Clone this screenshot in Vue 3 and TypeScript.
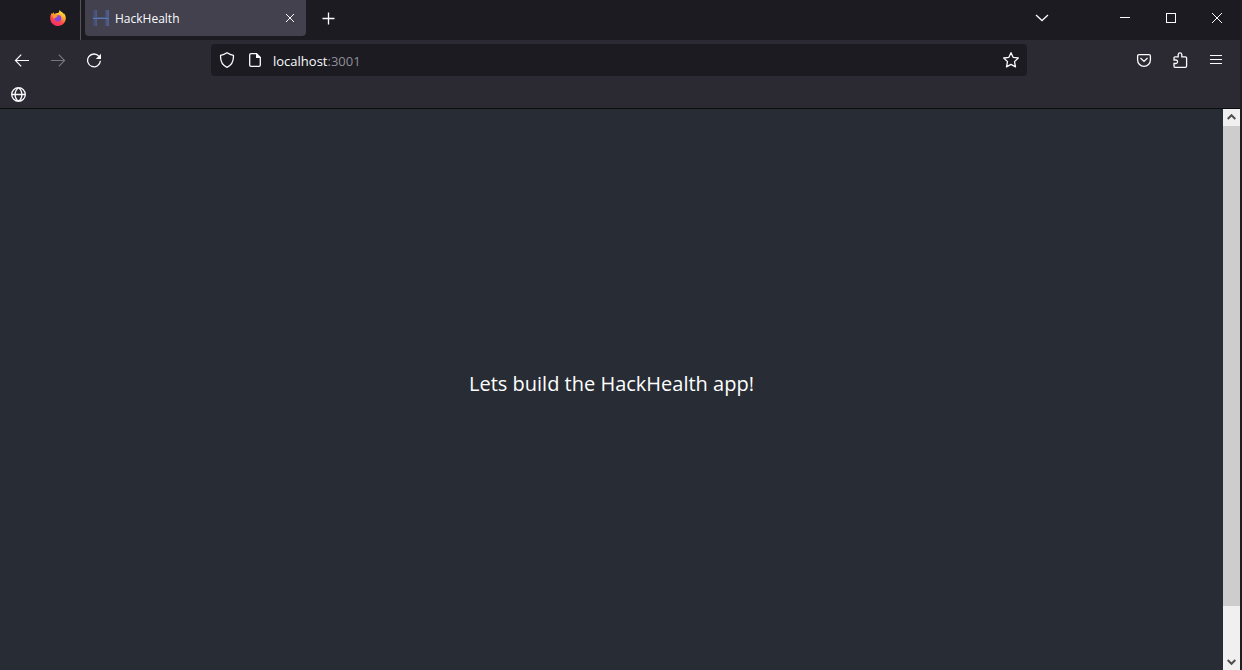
<script setup lang="ts">
import { ref } from 'vue'

const tabTitle = ref('HackHealth')
const host = ref('localhost')
const port = ref(':3001')
const message = ref('Lets build the HackHealth app!')
</script>

<template>
  <div class="window">
    <header>
      <div class="tabs">
        <button class="view" aria-label="Firefox View">
          <svg width="16" height="16" viewBox="0 0 16 16">
            <defs>
              <linearGradient id="flame" x1="0.8" y1="0" x2="0.3" y2="1">
                <stop offset="0" stop-color="#fff04a" />
                <stop offset="0.35" stop-color="#ffb52e" />
                <stop offset="0.65" stop-color="#ff4f42" />
                <stop offset="1" stop-color="#f0256f" />
              </linearGradient>
              <radialGradient id="orb">
                <stop offset="0" stop-color="#6a4ee8" />
                <stop offset="1" stop-color="#9a3fd5" />
              </radialGradient>
            </defs>
            <path fill="url(#flame)" d="M9.6 0C9 1.500 9.300 2.600 8 3.100C6.500 2.900 5.500 3.300 4.700 4C4 3.700 3.700 3 3.800 2.200C3 2.700 2.600 3.300 2.200 4L1.700 3C.6 4.600.2 6.300.2 8.200C.2 12.600 3.700 16 8 16C12.300 16 15.800 12.600 15.800 8.300C15.800 6.200 15.100 4.400 13.800 3.200L14 4.300C13 2.300 10.700 1.800 9.600 0Z" />
            <circle cx="8" cy="8.400" r="3.300" fill="url(#orb)" />
            <path fill="#ff9a32" d="M2.500 4.800C4 4 5.300 4.400 6.200 5.200L8.200 5.600C8 6.600 6.600 6.700 6.300 7.400C5.400 7.900 4.400 7.400 3.800 8.600C2.900 7.500 2.300 6 2.500 4.800Z" />
          </svg>
        </button>
        <div class="tab">
          <svg class="favicon" width="16" height="16" viewBox="0 0 16 16">
            <defs>
              <linearGradient id="post-left" x1="0" y1="0" x2="1" y2="0">
                <stop offset="0" stop-color="#454660" />
                <stop offset="1" stop-color="#4d5d8b" />
              </linearGradient>
              <linearGradient id="post-right" x1="0" y1="0" x2="1" y2="0">
                <stop offset="0" stop-color="#464b69" />
                <stop offset="1" stop-color="#50659a" />
              </linearGradient>
            </defs>
            <path fill="url(#post-left)" d="M0 0h4v16H0z" />
            <path fill="url(#post-right)" d="M12 0h4v16h-4z" />
            <path fill="#495880" d="M0 7h16v2H0z" />
            <path fill="#5a76b4" d="M0 8h16v1H0z" />
          </svg>
          <span class="title">{{ tabTitle }}</span>
          <button class="close-tab" aria-label="Close tab">
            <svg width="10" height="10" viewBox="0 0 10 10"><path d="M1 1l8 8M9 1L1 9" /></svg>
          </button>
        </div>
        <button class="tool" aria-label="New tab">
          <svg width="13" height="13" viewBox="0 0 13 13"><path d="M6.500.500v12M.500 6.500h12" stroke-width="1.300" /></svg>
        </button>
        <span class="grow"></span>
        <button class="tool all-tabs" aria-label="List all tabs">
          <svg width="14" height="8" viewBox="0 0 14 8"><path d="M1 1l6 5.500L13 1" stroke-width="1.300" /></svg>
        </button>
        <button class="caption" aria-label="Minimize">
          <svg width="10" height="10" viewBox="0 0 10 10" shape-rendering="crispEdges"><path d="M0 4.500h10" /></svg>
        </button>
        <button class="caption" aria-label="Maximize">
          <svg width="10" height="10" viewBox="0 0 10 10" shape-rendering="crispEdges"><path d="M.5.500h9v9h-9z" /></svg>
        </button>
        <button class="caption" aria-label="Close">
          <svg width="10" height="10" viewBox="0 0 10 10"><path d="M0 0l10 10M10 0L0 10" /></svg>
        </button>
      </div>

      <div class="nav">
        <button class="tool" aria-label="Back">
          <svg width="16" height="16" viewBox="0 0 16 16"><path d="M15 8.500H2M7.200 2.700L1.500 8.500L7.200 14.300" stroke-width="1.200" /></svg>
        </button>
        <button class="tool" aria-label="Forward" disabled>
          <svg width="16" height="16" viewBox="0 0 16 16"><path d="M1 8.500h13M8.800 2.700L14.500 8.500L8.800 14.300" stroke-width="1.200" /></svg>
        </button>
        <button class="tool" aria-label="Reload">
          <svg width="16" height="16" viewBox="0 0 16 16">
            <path d="M13 4.400A6.400 6.400 0 1 0 14.400 8.800" stroke-width="1.300" />
            <path class="solid" d="M15 1.800v5.200h-5.200z" />
          </svg>
        </button>
        <div class="address">
          <button class="shield" aria-label="Tracking protection">
            <svg width="16" height="16" viewBox="0 0 16 16"><path d="M8 .8Q11 2.800 14.400 3.300C14.800 8.500 12.500 13.300 8 15.300C3.500 13.300 1.200 8.500 1.600 3.300Q5 2.800 8 .8Z" stroke-width="1.300" /></svg>
          </button>
          <button class="site" aria-label="Site information">
            <svg width="16" height="16" viewBox="0 0 16 16">
              <path d="M9.500 1.700H4Q2.700 1.700 2.700 3v10Q2.700 14.300 4 14.300h8Q13.300 14.300 13.300 13V5.500" stroke-width="1.300" />
              <path class="solid" d="M9 1h.8L14 5.200V6H9z" />
            </svg>
          </button>
          <a class="url" href="#">{{ host }}<span class="port">{{ port }}</span></a>
          <button class="star" aria-label="Bookmark this page">
            <svg width="18" height="18" viewBox="0 0 18 18"><path d="M9 1.700L11.100 6.300L16.300 7L12.500 10.600L13.500 15.900L9 13.400L4.500 15.900L5.500 10.600L1.700 7L6.900 6.300Z" stroke-width="1.300" stroke-linejoin="round" /></svg>
          </button>
        </div>
        <button class="tool" aria-label="Save to Pocket">
          <svg width="16" height="16" viewBox="0 0 16 16"><path d="M3 2.600h10Q14.400 2.600 14.400 4V7.900A6.400 6.400 0 0 1 1.600 7.900V4Q1.600 2.600 3 2.600ZM4.500 6L8 9.400L11.500 6" stroke-width="1.300" /></svg>
        </button>
        <button class="tool" aria-label="Extensions">
          <svg width="16" height="16" viewBox="0 0 16 16"><path d="M2 8V5.800Q2 4.800 3 4.800H6.200V2.500Q6.400.800 8 .8Q9.600.800 9.800 2.500V4.800H13.300Q14.600 4.800 14.600 6V14Q14.600 15.300 13.300 15.300H3Q2 15.300 2 14.300V11.500H4Q5.600 11.300 5.600 9.800Q5.600 8.200 4 8Z" stroke-width="1.300" /></svg>
        </button>
        <button class="tool" aria-label="Open application menu">
          <svg width="12" height="12" viewBox="0 0 12 12"><path d="M0 1.500h12M0 5.500h12M0 9.500h12" stroke-width="1.200" /></svg>
        </button>
      </div>

      <div class="bookmarks">
        <button class="globe" aria-label="Bookmark">
          <svg width="15" height="15" viewBox="0 0 15 15"><path d="M7.500.700a6.800 6.800 0 1 0 0 13.600A6.800 6.800 0 1 0 7.500.700ZM7.500.700C3 4 3 11 7.500 14.300C12 11 12 4 7.500.700M1 7.500h13" stroke-width="1.300" /></svg>
        </button>
      </div>
    </header>

    <div class="viewport">
      <main><p>{{ message }}</p></main>
      <div class="scrollbar">
        <button aria-label="Scroll up">
          <svg width="9" height="9" viewBox="0 0 9 9"><path d="M.7 6L4.500 2.200L8.300 6" /></svg>
        </button>
        <div class="track"><div class="thumb"></div></div>
        <button aria-label="Scroll down">
          <svg width="9" height="9" viewBox="0 0 9 9"><path d="M.7 3L4.500 6.800L8.300 3" /></svg>
        </button>
      </div>
    </div>
  </div>
</template>

<style>
body {
  margin: 0;
}
</style>

<style scoped>
.window {
  box-sizing: border-box;
  display: flex;
  flex-direction: column;
  height: 100vh;
  border-right: 2px solid #1f1f23;
  background: #2b2a33;
  color: #fbfbfe;
  font-family: "Open Sans", "Noto Sans", sans-serif;
  font-size: 12px;
}

button {
  display: flex;
  align-items: center;
  justify-content: center;
  flex: none;
  padding: 0;
  border: 0;
  background: none;
  color: inherit;
}

button:disabled {
  color: #77767e;
}

svg {
  display: block;
  flex: none;
  fill: none;
  stroke: currentColor;
}

.view svg,
.favicon {
  stroke: none;
}

.solid {
  fill: currentColor;
  stroke: none;
}

header {
  border-bottom: 1px solid #0c0c0d;
}

.tabs {
  display: flex;
  height: 40px;
  background: #1c1b22;
}

.view {
  width: 81px;
  padding: 0 14px 4px 50px;
  border-right: 1px solid #56555c;
}

.tab {
  box-sizing: border-box;
  display: flex;
  align-items: center;
  width: 221px;
  height: 36px;
  margin: 0 4px;
  padding: 0 8px;
  border-radius: 0 0 4px 4px;
  background: #42414d;
}

.favicon {
  margin-right: 6px;
}

.title {
  flex: 1;
}

.close-tab {
  width: 16px;
  height: 20px;
}

.tool {
  width: 36px;
  height: 36px;
}

.grow {
  flex: 1;
}

.all-tabs {
  margin-right: 42px;
}

.caption {
  width: 46px;
  height: 36px;
}

.nav {
  display: flex;
  align-items: center;
  height: 40px;
  padding: 0 6px 0 4px;
}

.address {
  box-sizing: border-box;
  display: flex;
  align-items: center;
  flex: 1;
  height: 32px;
  margin: 0 99px;
  padding: 0 7px 0 8px;
  border-radius: 4px;
  background: #1c1b22;
}

.site {
  margin: 0 10px 0 12px;
}

.url {
  flex: 1;
  padding-top: 2px;
  color: inherit;
  font-size: 13px;
  text-decoration: none;
}

.port {
  color: #8f8f98;
}

.bookmarks {
  height: 28px;
  padding-left: 11px;
}

.globe {
  height: 29px;
}

.viewport {
  display: flex;
  flex: 1;
  min-height: 0;
}

main {
  display: flex;
  align-items: center;
  justify-content: center;
  flex: 1;
  padding-bottom: 12px;
  background: #282c34;
  color: white;
  font-size: 20px;
}

p {
  margin: 0;
}

.scrollbar {
  display: flex;
  flex-direction: column;
  width: 17px;
  background: #f0f0f0;
  color: #505050;
}

.scrollbar button {
  height: 17px;
}

.scrollbar path {
  stroke-width: 2;
}

.track {
  flex: 1;
}

.thumb {
  height: 91%;
  background: #cdcdcd;
}
</style>
